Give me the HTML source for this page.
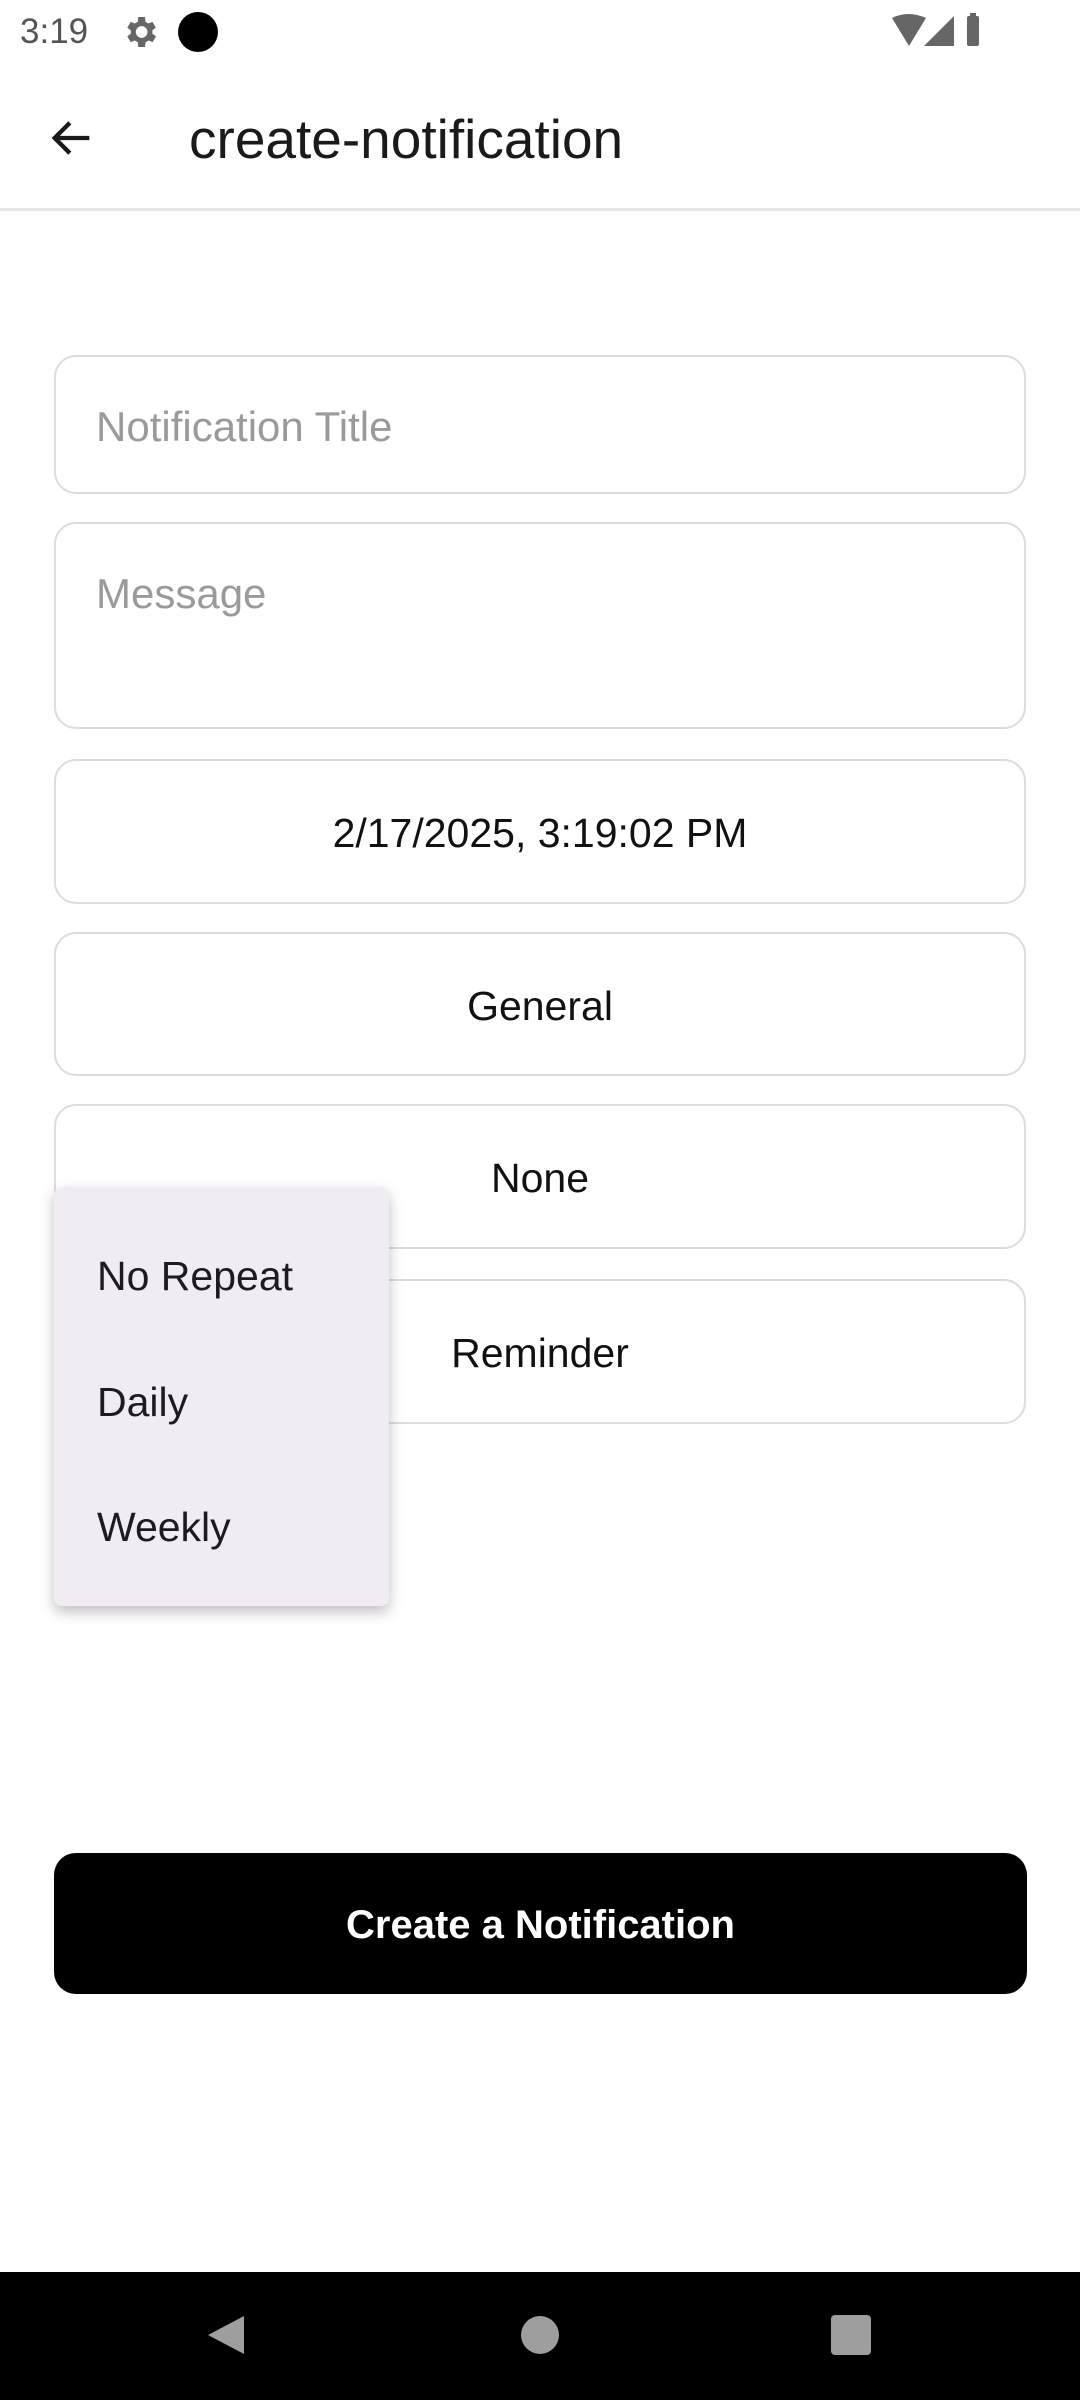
<!DOCTYPE html>
<html><head><meta charset="utf-8"><style>
*{margin:0;padding:0;box-sizing:border-box}
body{width:1080px;height:2400px;background:#fff;position:relative;overflow:hidden;font-family:"Liberation Sans",sans-serif;color:#1a1a1a}
.abs{position:absolute}
.field{position:absolute;left:54px;width:972px;border:2px solid #dcdcdc;border-radius:22px;background:#fff}
.c{display:flex;align-items:center;justify-content:center;font-size:41px;color:#111;padding-top:4px}
.ph{font-size:42px;color:#9a9a9a;position:absolute;left:40px}
.menu{position:absolute;left:54px;top:1187px;width:335px;height:419px;background:#f1ecf4;border-radius:8px;box-shadow:0 6px 14px rgba(0,0,0,.25)}
.mi{position:absolute;left:43px;font-size:41px;color:#1d1b20}
</style></head><body>
<div class="abs" style="left:20px;top:12px;font-size:35px;color:#555">3:19</div>
<svg class="abs" style="left:120px;top:12px" width="40" height="40" viewBox="0 0 24 24"><path fill="#666" d="M19.4 13a7.5 7.5 0 000-2l2.1-1.6-2-3.5-2.5 1a7 7 0 00-1.7-1L15 3h-4l-.4 2.9a7 7 0 00-1.7 1l-2.5-1-2 3.5L6.5 11a7.5 7.5 0 000 2l-2.1 1.6 2 3.5 2.5-1a7 7 0 001.7 1L11 21h4l.4-2.9a7 7 0 001.7-1l2.5 1 2-3.5zM13 15.5a3.5 3.5 0 110-7 3.5 3.5 0 010 7z"/></svg>
<div class="abs" style="left:178px;top:12px;width:40px;height:40px;border-radius:50%;background:#000"></div>
<svg class="abs" style="left:890px;top:12px" width="120" height="40" viewBox="0 0 120 40"><path d="M2 6 Q18 -2 36 6 L19 34Z" fill="#666"/><path d="M64 4 L64 34 L34 34Z" fill="#666"/><rect x="77" y="4" width="12" height="30" rx="2" fill="#666"/><rect x="80" y="1" width="6" height="4" fill="#666"/></svg>
<svg class="abs" style="left:46px;top:112px" width="52" height="52" viewBox="0 0 24 24"><path d="M20 12H5M11 5l-7 7 7 7" fill="none" stroke="#1a1a1a" stroke-width="2"/></svg>
<div class="abs" style="left:189px;top:107px;font-size:55px;color:#1a1a1a">create-notification</div>
<div class="abs" style="left:0;top:208px;width:1080px;height:3px;background:#e6e6e6"></div>
<div class="field" style="top:355px;height:139px"><span class="ph" style="top:46px">Notification Title</span></div>
<div class="field" style="top:522px;height:207px"><span class="ph" style="top:46px">Message</span></div>
<div class="field c" style="top:759px;height:145px">2/17/2025, 3:19:02 PM</div>
<div class="field c" style="top:932px;height:144px">General</div>
<div class="field c" style="top:1104px;height:145px">None</div>
<div class="field c" style="top:1279px;height:145px">Reminder</div>
<div class="menu">
<div class="mi" style="top:66px">No Repeat</div>
<div class="mi" style="top:192px">Daily</div>
<div class="mi" style="top:317px">Weekly</div>
</div>
<div class="abs c" style="left:54px;top:1853px;width:973px;height:141px;background:#000;border-radius:22px;color:#fff;font-weight:bold;font-size:40px">Create a Notification</div>
<div class="abs" style="left:0;top:2272px;width:1080px;height:128px;background:#000"></div>
<svg class="abs" style="left:200px;top:2310px" width="50" height="50" viewBox="0 0 50 50"><path d="M44 6 L44 44 L8 25Z" fill="#9e9e9e"/></svg>
<div class="abs" style="left:521px;top:2316px;width:38px;height:38px;border-radius:50%;background:#9e9e9e"></div>
<div class="abs" style="left:831px;top:2315px;width:40px;height:40px;border-radius:4px;background:#9e9e9e"></div>
</body></html>
